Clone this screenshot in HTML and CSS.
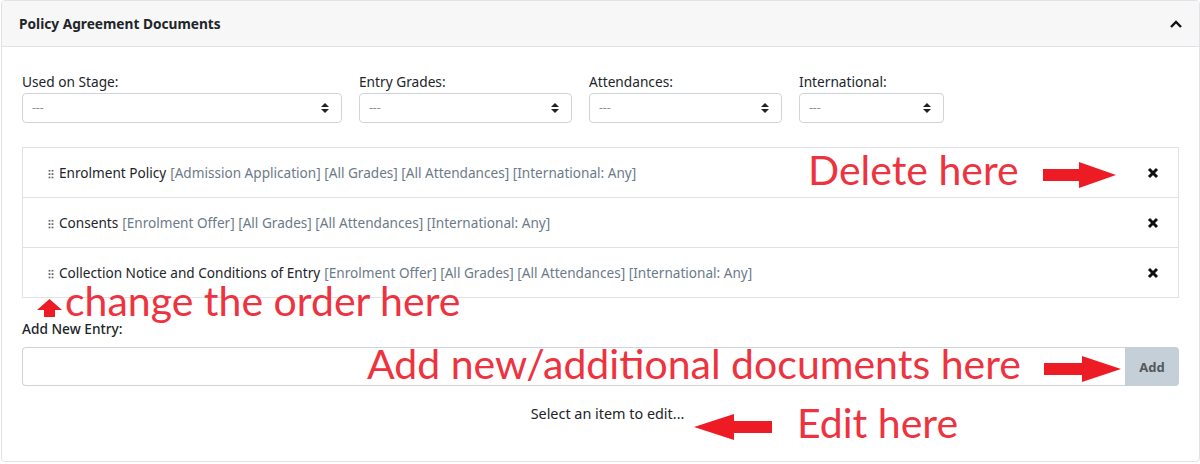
FILE: index.html
```html
<!DOCTYPE html>
<html lang="en">
<head>
    <meta charset="UTF-8">
    <meta name="viewport" content="width=device-width, initial-scale=1.0">
    <title>Policy Agreement Documents</title>
    <link rel="stylesheet" href="styles.css">
</head>
<body>
    <div class="card">
        <div class="card-header">
            <h5>Policy Agreement Documents</h5>
            <svg class="chevron" width="14" height="10" viewBox="0 0 14 10"><path d="M2 8 L7 3 L12 8" fill="none" stroke="#111" stroke-width="2.4"/></svg>
        </div>
        <div class="card-body">
            <div class="filters">
                <div class="field w1">
                    <label>Used on Stage:</label>
                    <div class="select">---<span class="arrows"></span></div>
                </div>
                <div class="field w2">
                    <label>Entry Grades:</label>
                    <div class="select">---<span class="arrows"></span></div>
                </div>
                <div class="field w3">
                    <label>Attendances:</label>
                    <div class="select">---<span class="arrows"></span></div>
                </div>
                <div class="field w4">
                    <label>International:</label>
                    <div class="select">---<span class="arrows"></span></div>
                </div>
            </div>

            <ul class="doc-list">
                <li>
                    <span class="grip"></span>
                    <span class="name">Enrolment Policy</span>
                    <span class="meta">[Admission Application] [All Grades] [All Attendances] [International: Any]</span>
                    <span class="remove"><svg width="12" height="12" viewBox="0 0 12 12"><path d="M2 2 L10 10 M10 2 L2 10" stroke="#111" stroke-width="3"/></svg></span>
                </li>
                <li>
                    <span class="grip"></span>
                    <span class="name">Consents</span>
                    <span class="meta">[Enrolment Offer] [All Grades] [All Attendances] [International: Any]</span>
                    <span class="remove"><svg width="12" height="12" viewBox="0 0 12 12"><path d="M2 2 L10 10 M10 2 L2 10" stroke="#111" stroke-width="3"/></svg></span>
                </li>
                <li>
                    <span class="grip"></span>
                    <span class="name">Collection Notice and Conditions of Entry</span>
                    <span class="meta">[Enrolment Offer] [All Grades] [All Attendances] [International: Any]</span>
                    <span class="remove"><svg width="12" height="12" viewBox="0 0 12 12"><path d="M2 2 L10 10 M10 2 L2 10" stroke="#111" stroke-width="3"/></svg></span>
                </li>
            </ul>

            <label class="add-label">Add New Entry:</label>
            <div class="input-group">
                <input type="text">
                <button type="button">Add</button>
            </div>

            <p class="hint">Select an item to edit...</p>
        </div>

        <!-- annotations -->
        <div class="note note-delete">Delete here</div>
        <svg class="arrow arrow-delete" width="74" height="28" viewBox="0 0 74 28"><path d="M0 8 H36 V1 L73 14 L36 27 V20 H0 Z" fill="#ed1c24"/></svg>
        <div class="note note-order">change the order here</div>
        <svg class="arrow arrow-up" width="25" height="18" viewBox="0 0 25 18"><path d="M12.5 0 L25 11 H18 V18 H7 V11 H0 Z" fill="#ed1c24"/></svg>
        <div class="note note-add">Add new/additional documents here</div>
        <svg class="arrow arrow-add" width="78" height="28" viewBox="0 0 78 28"><path d="M0 8 H38 V1 L77 14 L38 27 V20 H0 Z" fill="#ed1c24"/></svg>
        <svg class="arrow arrow-edit" width="78" height="28" viewBox="0 0 78 28"><path d="M78 8 H40 V1 L0 14 L40 27 V20 H78 Z" fill="#ed1c24"/></svg>
        <div class="note note-edit">Edit here</div>
    </div>
</body>
</html>
```

FILE: styles.css
```css
body {
    margin: 0;
    font-family: "Noto Sans", "Open Sans", sans-serif;
    color: #212529;
    background-color: #fff;
}
.card {
    position: relative;
    margin-left: 1px;
    height: 462px;
    border: 1px solid #dfe3e7;
    border-radius: 4px;
    box-sizing: border-box;
    overflow: hidden;
}
.card-header {
    height: 45px;
    background-color: #f7f7f7;
    border-bottom: 1px solid #dee2e6;
    display: flex;
    align-items: center;
    justify-content: space-between;
    padding: 0 16px 0 17px;
}
.card-header h5 {
    margin: 0;
    font-size: 13.7px;
    font-weight: 700;
}
.card-body {
    padding: 26px 20px 0 20px;
}
.filters {
    display: flex;
    gap: 17px;
}
.field label {
    display: block;
    font-size: 13.7px;
    line-height: 18px;
    margin-bottom: 2px;
    color: #212529;
}
.w1 { width: 320px; }
.w2 { width: 213px; }
.w3 { width: 193px; }
.w4 { width: 145px; }
.select {
    position: relative;
    height: 30px;
    border: 1px solid #ced4da;
    border-radius: 4px;
    box-sizing: border-box;
    padding-left: 9px;
    font-size: 12px;
    line-height: 28px;
    color: #8a8f94;
}
.arrows {
    position: absolute;
    right: 12px;
    top: 9px;
    width: 0;
    height: 0;
    border-left: 4px solid transparent;
    border-right: 4px solid transparent;
    border-bottom: 4px solid #222;
}
.arrows::after {
    content: "";
    position: absolute;
    left: -4px;
    top: 6px;
    border-left: 4px solid transparent;
    border-right: 4px solid transparent;
    border-top: 4px solid #222;
}
.doc-list {
    list-style: none;
    margin: 24px 0 0 0;
    padding: 0;
    border: 1px solid #e2e2e2;
}
.doc-list li {
    display: flex;
    align-items: center;
    height: 49px;
    padding: 0 19px 0 25px;
    border-top: 1px solid #e2e2e2;
    font-size: 13.6px;
}
.doc-list li:first-child {
    border-top: none;
}
.grip {
    width: 6px;
    height: 10px;
    margin-right: 5px;
    margin-top: 2px;
    background-image: radial-gradient(circle, #666 0.9px, transparent 1.2px);
    background-size: 3px 3.4px;
}
.name {
    color: #212529;
    margin-right: 4px;
}
.meta {
    color: #6c7a89;
    flex: 1;
}
.remove {
    display: flex;
}
.add-label {
    display: block;
    margin-top: 22px;
    font-size: 13.7px;
    font-weight: 500;
    line-height: 18px;
}
.input-group {
    display: flex;
    margin-top: 9px;
    height: 39px;
}
.input-group input {
    flex: 1;
    border: 1px solid #ced4da;
    border-right: none;
    border-radius: 4px 0 0 4px;
    margin: 0;
    outline: none;
}
.input-group button {
    width: 54px;
    border: none;
    background-color: #c4cfd7;
    color: #55595d;
    font-family: inherit;
    font-weight: 700;
    font-size: 13px;
    border-radius: 0 4px 4px 0;
}
.hint {
    text-align: center;
    font-size: 14.4px;
    line-height: 20px;
    margin: 18px 0 0 0;
    padding-left: 14px;
}
.note {
    position: absolute;
    font-family: Lato, "Open Sans", sans-serif;
    color: #ee3340;
    font-size: 41px;
    line-height: 41px;
    white-space: nowrap;
}
.note-delete { left: 806px; top: 148px; }
.note-order { left: 63px; top: 286px; line-height: 28px; }
.note-add { left: 365px; top: 342px; }
.note-edit { left: 795px; top: 401px; }
.arrow {
    position: absolute;
}
.arrow-delete { left: 1041px; top: 160px; }
.arrow-up { left: 35px; top: 298px; }
.arrow-add { left: 1042px; top: 354px; }
.arrow-edit { left: 692px; top: 412px; }
```
